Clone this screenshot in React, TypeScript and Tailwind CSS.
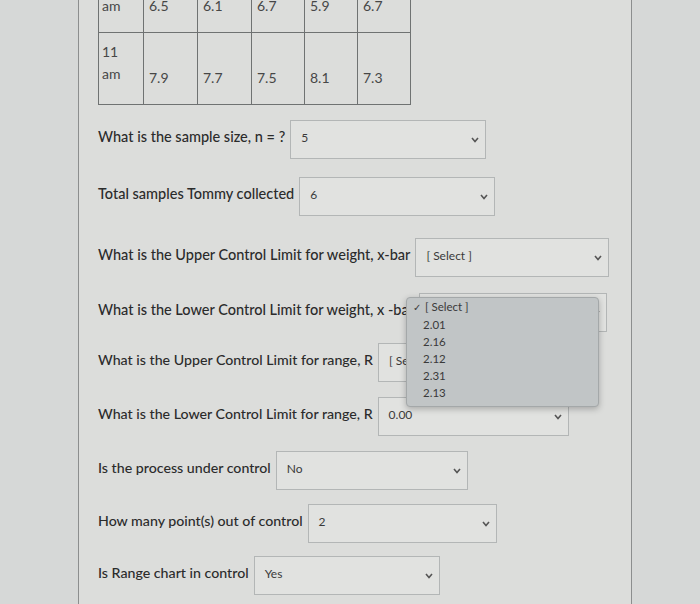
import React from "react";

const Chevron = () => (
  <svg width="8" height="6" viewBox="0 0 8 6" className="mt-[7px] mr-[6px] shrink-0">
    <polyline points="1,1 4,4.5 7,1" fill="none" stroke="#555" strokeWidth="1.6" />
  </svg>
);

type Row = { label: string; value: string; mt: string; w: string; fs: string; menu?: boolean };

const rows: Row[] = [
  { label: "What is the sample size, n = ?", value: "5", mt: "mt-[15px]", w: "w-[196px]", fs: "text-[14.5px]" },
  { label: "Total samples Tommy collected", value: "6", mt: "mt-[18px]", w: "w-[196px]", fs: "text-[14.5px]" },
  { label: "What is the Upper Control Limit for weight, x-bar", value: "[ Select ]", mt: "mt-[22px]", w: "w-[194px]", fs: "text-[14.5px]" },
  { label: "What is the Lower Control Limit for weight, x -bar", value: "", mt: "mt-[16px]", w: "w-[188px]", fs: "text-[14.5px]", menu: true },
  { label: "What is the Upper Control Limit for range, R", value: "[ Select ]", mt: "mt-[11px]", w: "w-[196px]", fs: "text-[14.2px]" },
  { label: "What is the Lower Control Limit for range, R", value: "0.00", mt: "mt-[15px]", w: "w-[191px]", fs: "text-[14.2px]" },
  { label: "Is the process under control", value: "No", mt: "mt-[15px]", w: "w-[192px]", fs: "text-[14.2px]" },
  { label: "How many point(s) out of control", value: "2", mt: "mt-[14px]", w: "w-[189px]", fs: "text-[14.2px]" },
  { label: "Is Range chart in control", value: "Yes", mt: "mt-[13px]", w: "w-[186px]", fs: "text-[14.2px]" },
];

const r1 = ["6.5", "6.1", "6.7", "5.9", "6.7"];
const r2 = ["7.9", "7.7", "7.5", "8.1", "7.3"];
const colW = ["w-[54px]", "w-[54px]", "w-[53px]", "w-[53px]", "w-[53px]"];

export default function App() {
  return (
    <div
      className="w-[700px] h-[604px] overflow-hidden bg-[#d6d8d7] text-[#2b2b2b]"
      style={{ fontFamily: "Lato, 'Open Sans', sans-serif" }}
    >
      <div className="flow-root ml-[78px] w-[554px] h-[604px] border-l border-r border-[#8c8e8e] bg-[#dcdddb] pl-[19px]">
        <table className="border-collapse -mt-[38px] text-[14px] text-[#474747]">
          <tbody>
            <tr className="h-[70px]">
              <td className="w-[45px] border border-[#6f7272] align-top pl-[3px] pt-[10px] leading-[22px]">
                10
                <br />
                am
              </td>
              {r1.map((v, i) => (
                <td key={i} className={`${colW[i]} border border-[#6f7272] align-top pl-[5px] pt-[32px] leading-[22px]`}>
                  {v}
                </td>
              ))}
            </tr>
            <tr className="h-[72px]">
              <td className="w-[45px] border border-[#6f7272] align-top pl-[3px] pt-[8px] leading-[22px]">
                11
                <br />
                am
              </td>
              {r2.map((v, i) => (
                <td key={i} className={`${colW[i]} border border-[#6f7272] align-top pl-[5px] pt-[34px] leading-[22px]`}>
                  {v}
                </td>
              ))}
            </tr>
          </tbody>
        </table>

        {rows.map((r, i) => (
          <div key={i} className={`relative flex items-baseline gap-[5px] ${r.mt}`}>
            <span className={`${r.fs} font-medium text-[#2b2b2b] whitespace-nowrap`}>{r.label}</span>
            <div
              className={`${r.w} h-[39px] shrink-0 border border-[#b3b6b6] bg-[#e1e2e0] pl-[10px] pt-[9px] flex justify-between items-start`}
            >
              <span className="text-[12px] leading-[16px] text-[#3a3a3a]">{r.value || "\u00a0"}</span>
              <Chevron />
            </div>
            {r.menu && (
              <div className="absolute left-[308px] top-[4px] w-[193px] h-[110px] rounded-[4px] border border-[#a4a8a9] bg-[#c1c5c6] shadow-[0_2px_6px_rgba(0,0,0,0.25)] text-[11.5px] leading-[17px] text-[#3a3a3a] z-10">
                <div className="flex items-baseline">
                  <span className="w-[18px] pl-[6px] text-[10px]">✓</span>
                  <span>[ Select ]</span>
                </div>
                {["2.01", "2.16", "2.12", "2.31", "2.13"].map((o) => (
                  <div key={o} className="pl-[16px]">
                    {o}
                  </div>
                ))}
              </div>
            )}
          </div>
        ))}
      </div>
    </div>
  );
}
